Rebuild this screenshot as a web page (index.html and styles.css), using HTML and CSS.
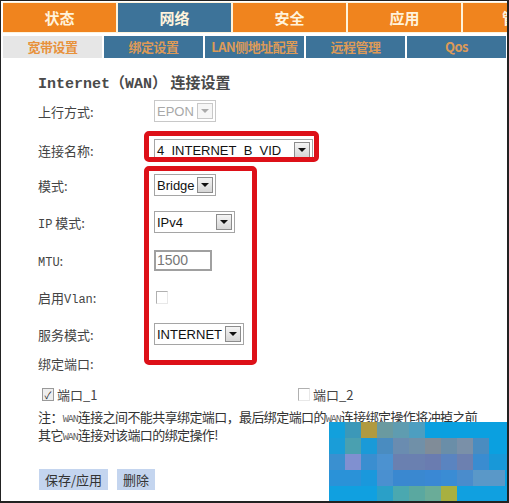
FILE: index.html
```html
<!DOCTYPE html>
<html lang="zh-CN">
<head>
  <meta charset="UTF-8">
  <title>Internet (WAN) 连接设置</title>
  <link rel="stylesheet" href="styles.css">
</head>
<body>
<div class="frame">

  <div class="topnav">
    <div class="tab">状态</div>
    <div class="tab active">网络</div>
    <div class="tab">安全</div>
    <div class="tab">应用</div>
    <div class="tab tail">管</div>
  </div>

  <div class="subnav">
    <div class="sub current">宽带设置</div>
    <div class="sub">绑定设置</div>
    <div class="sub">LAN侧地址配置</div>
    <div class="sub">远程管理</div>
    <div class="sub">Qos</div>
  </div>

  <div class="content">
    <h3 class="title"><span class="mono">Internet</span>（<span class="mono">WAN</span>） 连接设置</h3>

    <div class="row r1">
      <span class="label">上行方式:</span>
      <span class="sel disabled w-epon"><span class="val">EPON</span><span class="arrow"></span></span>
    </div>
    <div class="row r2">
      <span class="label">连接名称:</span>
      <span class="sel w-name"><span class="val">4_INTERNET_B_VID_</span><span class="arrow"></span></span>
    </div>
    <div class="row r3">
      <span class="label">模式:</span>
      <span class="sel w-mode"><span class="val">Bridge</span><span class="arrow"></span></span>
    </div>
    <div class="row r4">
      <span class="label"><span class="mono">IP</span> 模式:</span>
      <span class="sel w-ip"><span class="val">IPv4</span><span class="arrow"></span></span>
    </div>
    <div class="row r5">
      <span class="label"><span class="mono">MTU</span>:</span>
      <span class="input w-mtu">1500</span>
    </div>
    <div class="row r6">
      <span class="label">启用<span class="mono">Vlan</span>:</span>
      <span class="check off"></span>
    </div>
    <div class="row r7">
      <span class="label">服务模式:</span>
      <span class="sel w-svc"><span class="val">INTERNET</span><span class="arrow"></span></span>
    </div>
    <div class="row r8">
      <span class="label">绑定端口:</span>
    </div>

    <div class="ports">
      <label class="port"><span class="check on">&#10003;</span>端口_1</label>
      <label class="port second"><span class="check off"></span>端口_2</label>
    </div>

    <p class="note">注：<span class="mono small">WAN</span>连接之间不能共享绑定端口，最后绑定端口的<span class="mono small">WAN</span>连接绑定操作将冲掉之前<br>其它<span class="mono small">WAN</span>连接对该端口的绑定操作!</p>

    <div class="buttons">
      <button class="btn">保存/应用</button>
      <button class="btn">删除</button>
    </div>
  </div>

  <div class="mark box-name"></div>
  <div class="mark box-group"></div>

  <div class="mosaic" id="mosaic"></div>
</div>

<script>
  const CELLS = [
    ["#12a0dc","#3c98b8","#b09a40","#6a9aa0","#5f9cb0","#4d9ec0","#0aa0e0","#0aa0e0","#0aa0e0","#0aa0e0","#0aa0e0","#0aa0e0"],
    ["#1a9dd8","#4aa0b0","#1a9ad8","#4a8cc0","#6a8cb0","#7090a8","#808c98","#6a8ea8","#7a90a8","#4a8cc0","#0aa0e0","#0aa0e0"],
    ["#3a90d0","#8090d0","#3a8ed0","#4c92d0","#6a80b0","#6a80b0","#6a7cb0","#5a84c0","#6c80b0","#3a8cd0","#1898d8","#1898d8"],
    ["#2a92d8","#2a92d8","#1a98dc","#4a90d0","#3a88d0","#3a88d0","#3a88d4","#3a8cd4","#4a8ccc","#5a98c8","#5a98c8","#0aa0e0"],
    ["#10a0e0","#10a0e0","#10a0e0","#2aa0c8","#4aa8b0","#5aa8a0","#6aac98","#a8b040","#10a0e0","#10a0e0","#10a0e0","#10a0e0"]
  ];

  const mosaic = document.getElementById("mosaic");
  CELLS.forEach(row => {
    row.forEach(color => {
      const cell = document.createElement("span");
      cell.style.background = color;
      mosaic.appendChild(cell);
    });
  });
</script>
</body>
</html>
```

FILE: styles.css
```css
body {
  margin: 0;
  background: #fff;
  font-family: "Noto Sans CJK SC", sans-serif;
  color: #333;
}

.frame {
  position: relative;
  box-sizing: border-box;
  width: 509px;
  height: 503px;
  border-left: 1px solid #222;
  border-top: 1px solid #222;
  border-right: 2px solid #222;
  border-bottom: 2px solid #222;
  padding: 1px 0 0 2px;
  overflow: hidden;
}

.mono {
  font-family: "Liberation Mono", monospace;
}

/* top menu */
.topnav {
  display: flex;
  gap: 2px;
  background: #fdf3dc;
  padding: 1px 0 1px 0;
  width: 504px;
}

.tab {
  flex: 0 0 113px;
  height: 29px;
  line-height: 29px;
  text-align: center;
  background: #f0841e;
  color: #fff3dc;
  font-size: 15px;
  font-weight: bold;
}

.tab.active {
  background: #3d7399;
}

.tab.tail {
  flex: 1 1 auto;
  min-width: 0;
  text-align: right;
  padding-right: 0;
  margin-right: -10px;
}

.subnav {
  display: flex;
  gap: 2px;
  margin-top: 3px;
  width: 504px;
}

.sub {
  flex: 0 0 99px;
  height: 22px;
  line-height: 22px;
  text-align: center;
  background: #3d7399;
  color: #dc9a58;
  font-size: 13px;
  font-weight: bold;
  white-space: nowrap;
  letter-spacing: -0.5px;
}

.sub.current {
  background: #e6e6e6;
  color: #e8923c;
}

/* form */
.content {
  padding: 14px 0 0 35px;
}

.title {
  margin: 0 0 8px 0;
  height: 20px;
  line-height: 20px;
  font-size: 15px;
  font-weight: bold;
  color: #4a4a4a;
}

.title .mono {
  font-size: 15px;
}

.row {
  display: flex;
  align-items: center;
  height: 22px;
  font-size: 13px;
}

.r1 { margin-bottom: 17px; }
.r2 { margin-bottom: 13px; }
.r3 { margin-bottom: 15px; }
.r4 { margin-bottom: 16px; }
.r5 { margin-bottom: 15px; }
.r6 { margin-bottom: 15px; }
.r7 { margin-bottom: 7px; }

.label {
  width: 116px;
  flex: none;
  color: #444;
}

.label .mono {
  font-size: 12px;
}

.sel {
  box-sizing: border-box;
  display: inline-flex;
  align-items: center;
  height: 22px;
  border: 1px solid #a5a5a5;
  background: #fff;
  font-family: "Liberation Sans", Arial, sans-serif;
  font-size: 13px;
  color: #111;
  overflow: hidden;
}

.sel .val {
  flex: 1;
  padding-left: 2px;
  white-space: nowrap;
  overflow: hidden;
}

.arrow {
  position: relative;
  box-sizing: border-box;
  flex: none;
  width: 16px;
  height: 16px;
  margin: 0 2px 0 1px;
  border: 1px solid #8c8c8c;
  background: linear-gradient(#f4f4f4, #d6d6d6);
}

.arrow::after {
  content: "";
  position: absolute;
  left: 3px;
  top: 5px;
  border-left: 4px solid transparent;
  border-right: 4px solid transparent;
  border-top: 4px solid #111;
}

.sel.disabled {
  border-color: #c8c8c8;
  color: #a8a8a8;
}

.sel.disabled .arrow {
  border-color: #c8c8c8;
  background: #f6f6f6;
}

.sel.disabled .arrow::after {
  border-top-color: #aaa;
}

.w-epon { width: 62px; }
.w-name { width: 159px; }
.w-mode { width: 62px; }
.w-ip { width: 81px; }
.w-svc { width: 90px; }

.input {
  box-sizing: border-box;
  display: inline-block;
  width: 58px;
  height: 21px;
  line-height: 17px;
  border: 2px solid #a0a0a0;
  padding-left: 1px;
  font-family: "Liberation Sans", Arial, sans-serif;
  font-size: 14px;
  color: #777;
}

.check {
  box-sizing: border-box;
  display: inline-block;
  width: 12px;
  height: 13px;
  border: 1px solid #b0b0b0;
  border-right-color: #e8e8e8;
  border-bottom-color: #e8e8e8;
  margin-left: 2px;
  font-size: 10px;
  line-height: 11px;
  text-align: center;
  color: #222;
}

.check.on {
  border-color: #999;
  background: #eee;
}

.ports {
  display: flex;
  margin-top: 11px;
  height: 18px;
  font-size: 13px;
  color: #444;
}

.port {
  flex: none;
  display: flex;
  align-items: center;
  gap: 3px;
  width: 258px;
}

.port .check {
  margin-left: 4px;
}

.port.second .check {
  margin-left: 2px;
}

.note {
  margin: 6px 0 0 0;
  font-size: 13px;
  line-height: 15px;
  color: #333;
  letter-spacing: -0.6px;
}

.note .small {
  font-size: 10px;
  color: #666;
  letter-spacing: -1px;
}

.buttons {
  display: flex;
  gap: 9px;
  margin-top: 24px;
  padding-left: 1px;
}

.btn {
  height: 21px;
  padding: 0 6px;
  border: none;
  background: #c4d5ef;
  color: #333;
  font-family: "Noto Sans CJK SC", sans-serif;
  font-size: 13px;
  line-height: 21px;
}

/* red annotation boxes */
.mark {
  position: absolute;
  box-sizing: border-box;
  border: 5px solid #dd1018;
  border-radius: 5px;
}

.box-name {
  left: 143px;
  top: 130px;
  width: 175px;
  height: 31px;
}

.box-group {
  left: 143px;
  top: 165px;
  width: 113px;
  height: 199px;
}

/* pixelated watermark */
.mosaic {
  position: absolute;
  left: 328px;
  top: 421px;
  width: 180px;
  height: 81px;
  display: grid;
  grid-template-columns: repeat(12, 16px);
  grid-auto-rows: 16px;
  overflow: hidden;
  background: #0aa0e0;
}
```
